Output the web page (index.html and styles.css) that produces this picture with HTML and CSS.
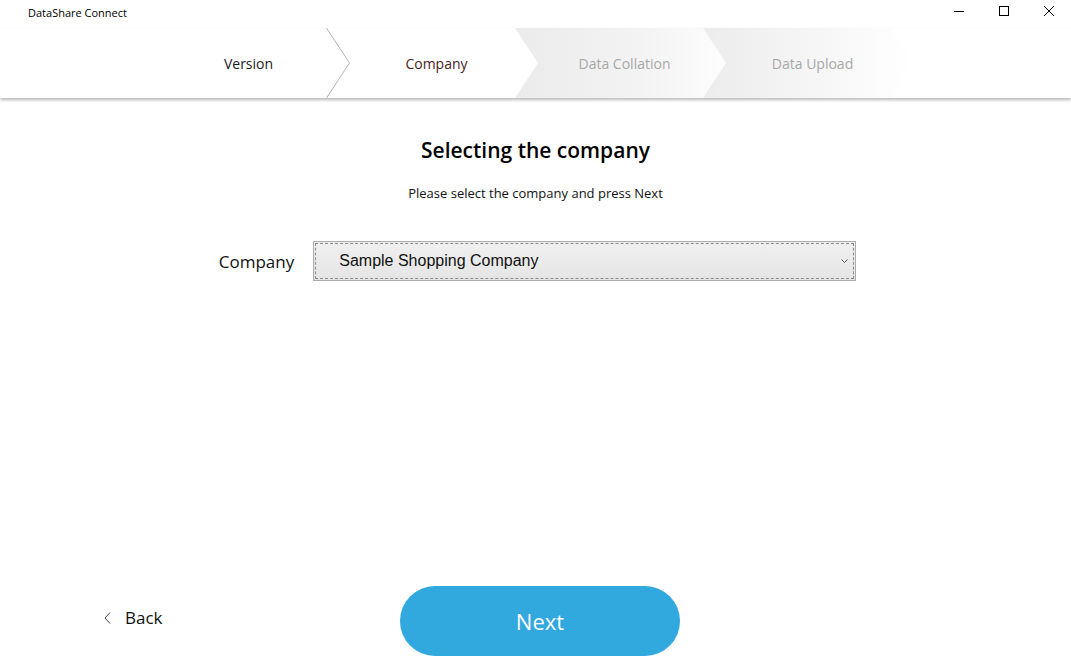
FILE: index.html
```html
<!DOCTYPE html>
<html lang="en">
<head>
  <meta charset="UTF-8">
  <title>DataShare Connect</title>
  <link rel="stylesheet" href="styles.css">
</head>
<body>
  <div class="app">
    <div class="titlebar">
      <span class="app-name">DataShare Connect</span>
      <div class="window-controls">
        <span class="win-btn">
          <svg width="10" height="10" viewBox="0 0 10 10"><path d="M0 5.5h10" stroke="#000" stroke-width="1"/></svg>
        </span>
        <span class="win-btn">
          <svg width="10" height="10" viewBox="0 0 10 10"><rect x="0.5" y="0.5" width="9" height="9" fill="none" stroke="#000" stroke-width="1"/></svg>
        </span>
        <span class="win-btn">
          <svg width="10" height="10" viewBox="0 0 10 10"><path d="M0 0L10 10M10 0L0 10" stroke="#000" stroke-width="1"/></svg>
        </span>
      </div>
    </div>

    <!-- Wizard steps -->
    <div class="steps">
      <div class="step done">
        <span>Version</span>
        <svg class="step-line" width="24" height="70" viewBox="0 0 24 70"><path d="M0.5 0L23.5 35L0.5 70" fill="none" stroke="#b4b4b4" stroke-width="1"/></svg>
      </div>
      <div class="step current"><span>Company</span></div>
      <div class="step todo"><span>Data Collation</span></div>
      <div class="step todo"><span>Data Upload</span></div>
    </div>

    <div class="content">
      <h1>Selecting the company</h1>
      <p class="hint">Please select the company and press Next</p>

      <div class="form-row">
        <label>Company</label>
        <div class="combo">
          <div class="combo-inner">
            <span class="combo-text">Sample Shopping Company</span>
            <svg class="combo-arrow" width="7" height="4" viewBox="0 0 7 4"><path d="M0.5 0.5L3.5 3.5L6.5 0.5" fill="none" stroke="#555" stroke-width="1"/></svg>
          </div>
        </div>
      </div>
    </div>

    <div class="footer">
      <div class="back">
        <svg width="7" height="12" viewBox="0 0 7 12"><path d="M6 0.5L1 6L6 11.5" fill="none" stroke="#444" stroke-width="1"/></svg>
        <span>Back</span>
      </div>
      <button class="next">Next</button>
    </div>
  </div>
</body>
</html>
```

FILE: styles.css
```css
html, body {
  margin: 0;
  padding: 0;
  background: #fff;
  font-family: "Open Sans", "Noto Sans", sans-serif;
  color: #111;
}

.app {
  height: 664px;
  display: flex;
  flex-direction: column;
  overflow: hidden;
}

/* Title bar */
.titlebar {
  height: 28px;
  display: flex;
  align-items: center;
  justify-content: space-between;
  padding-left: 28px;
}
.app-name {
  font-size: 11px;
  color: #000;
  margin-top: -4px;
}
.window-controls {
  display: flex;
  align-items: center;
  margin-top: -6px;
}
.win-btn {
  width: 45px;
  display: flex;
  justify-content: center;
}

/* Steps header */
.steps {
  height: 70px;
  display: flex;
  padding-left: 139px;
  box-shadow: 0 2px 3px rgba(0, 0, 0, 0.28);
  position: relative;
  z-index: 1;
}
.step {
  width: 211px;
  margin-right: -23px;
  display: flex;
  align-items: center;
  justify-content: center;
  padding-left: 8px;
  box-sizing: border-box;
  font-size: 14px;
  position: relative;
}
.step.done {
  color: #1a1a1a;
}
.step.current {
  color: #4a2222;
}
.step.todo {
  color: #a8a8a8;
  background: linear-gradient(to right, #ebebeb 0%, #f3f3f3 60%, #fdfdfd 100%);
  clip-path: polygon(0 0, calc(100% - 23px) 0, 100% 50%, calc(100% - 23px) 100%, 0 100%, 23px 50%);
}
.step.todo:last-child {
  background: linear-gradient(to right, #ececec 0%, #f6f6f6 55%, #fff 100%);
}
.step-line {
  position: absolute;
  right: 0;
  top: 0;
}

/* Main content */
.content {
  flex: 1;
  display: flex;
  flex-direction: column;
  align-items: center;
}
.content h1 {
  margin: 38px 0 0;
  font-size: 21px;
  font-weight: 600;
  color: #000;
}
.hint {
  margin: 20px 0 0;
  font-size: 13px;
  color: #111;
}

.form-row {
  display: flex;
  align-items: center;
  gap: 19px;
  margin-top: 39px;
  margin-left: 4px;
}
.form-row label {
  font-size: 17px;
  color: #111;
}
.combo {
  width: 543px;
  height: 40px;
  box-sizing: border-box;
  border: 1px solid #adadad;
  padding: 1px;
  background: linear-gradient(#f0f0f0, #e5e5e5);
}
.combo-inner {
  height: 100%;
  box-sizing: border-box;
  border: 1px dashed #8a8a8a;
  display: flex;
  align-items: center;
  justify-content: space-between;
  padding: 0 5px 0 23px;
}
.combo-text {
  font-family: "Liberation Sans", Arial, sans-serif;
  font-size: 16px;
  color: #111;
}

/* Footer */
.footer {
  display: grid;
  grid-template-columns: 400px 280px;
  align-items: center;
  padding-bottom: 8px;
}
.back {
  display: flex;
  align-items: center;
  gap: 14px;
  padding-left: 104px;
  margin-bottom: 7px;
  font-size: 17px;
  color: #111;
}
.next {
  height: 70px;
  border: none;
  border-radius: 35px;
  background: #31a8de;
  color: #fff;
  font-family: "Open Sans", "Noto Sans", sans-serif;
  font-size: 22px;
  cursor: pointer;
}
```
